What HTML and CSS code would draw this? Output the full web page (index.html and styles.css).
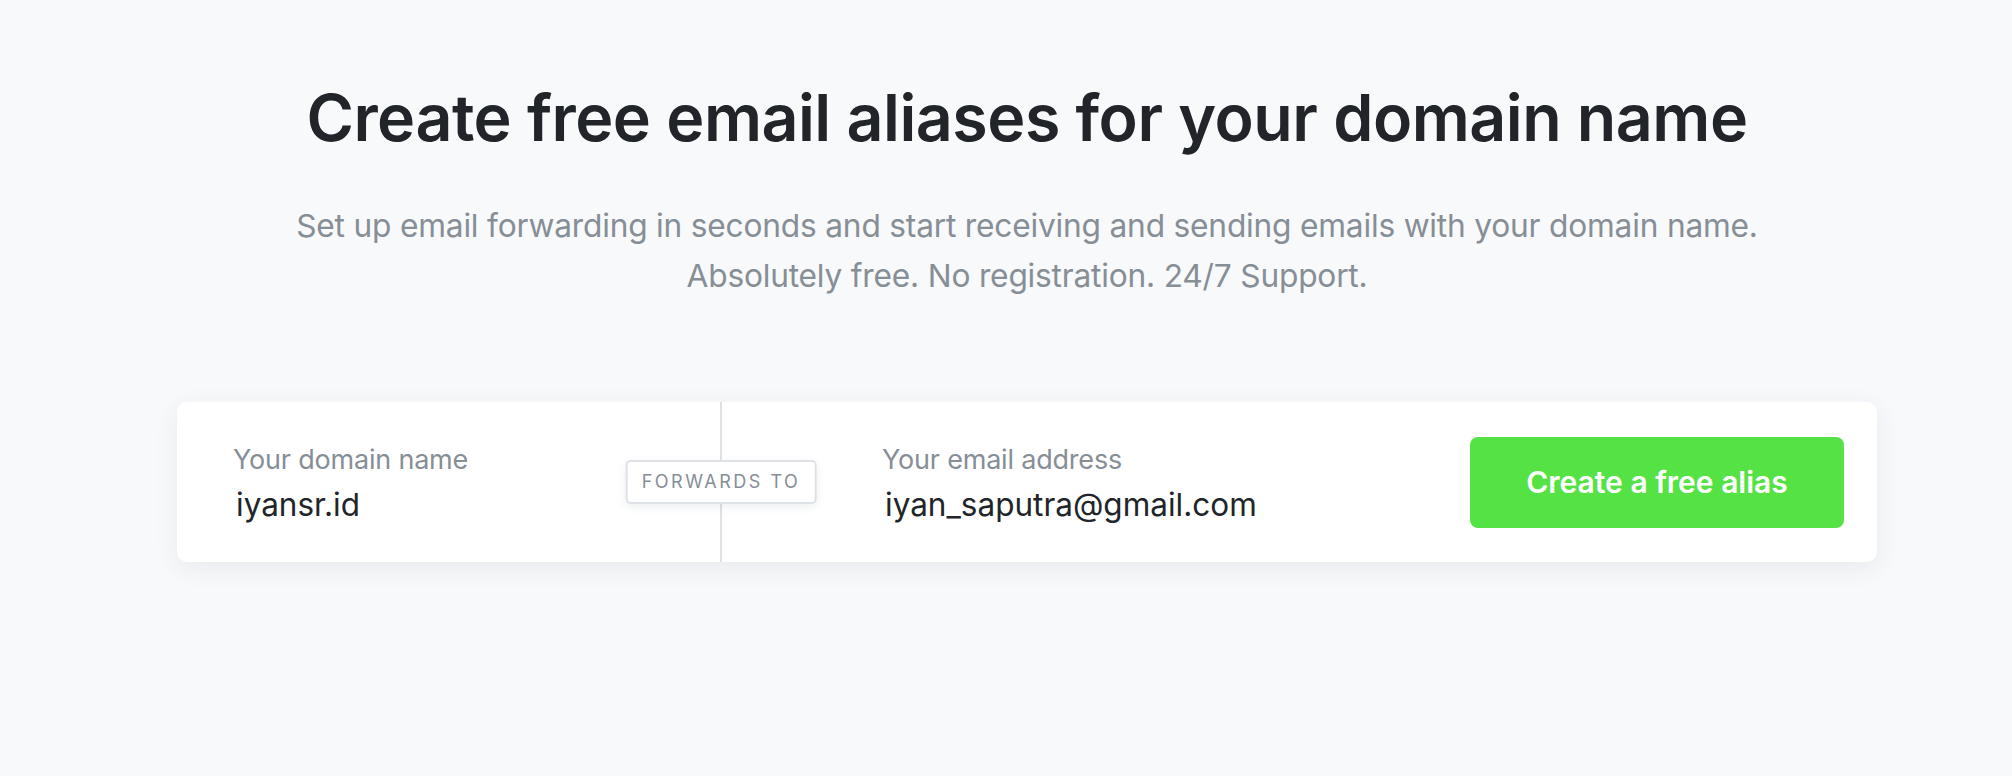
FILE: index.html
```html
<!DOCTYPE html>
<html lang="en">
<head>
<meta charset="utf-8">
<title>Create free email aliases</title>
<link rel="stylesheet" href="styles.css">
</head>
<body>
<main class="hero">
  <h1 class="title">Create free email aliases for your domain name</h1>
  <p class="subtitle">Set up email forwarding in seconds and start receiving and sending emails with your domain name.<br>Absolutely free. No registration. 24/7 Support.</p>
  <form class="card">
    <div class="field field-domain">
      <label class="label">Your domain name</label>
      <div class="value">iyansr.id</div>
    </div>
    <div class="divider"><span class="badge">FORWARDS TO</span></div>
    <div class="field field-email">
      <label class="label">Your email address</label>
      <div class="value">iyan_saputra@gmail.com</div>
    </div>
    <button type="button" class="btn">Create a free alias</button>
  </form>
</main>
</body>
</html>
```

FILE: styles.css
```css
html, body {
  margin: 0;
  padding: 0;
}
body {
  background: #f8f9fb;
  font-family: Inter, "Noto Sans", sans-serif;
  color: #212529;
  height: 776px;
  overflow: hidden;
}
.hero {
  display: flex;
  flex-direction: column;
  align-items: center;
  padding-top: 78px;
  padding-left: 42px;
}
.title {
  margin: 0;
  font-family: Inter, sans-serif;
  font-weight: 600;
  font-size: 64.5px;
  line-height: 80px;
  letter-spacing: -0.5px;
  color: #212529;
  text-align: center;
}
.subtitle {
  margin: 43px 0 0;
  font-family: Inter, sans-serif;
  font-weight: 400;
  font-size: 31.7px;
  line-height: 50px;
  letter-spacing: -0.2px;
  color: #868e96;
  text-align: center;
}
.card {
  margin-top: 101px;
  width: 1700px;
  height: 160px;
  background: #fff;
  border-radius: 10px;
  box-shadow: 0 6px 24px rgba(30, 50, 80, 0.08);
  display: flex;
  align-items: stretch;
}
.field {
  display: flex;
  flex-direction: column;
  justify-content: center;
  padding-top: 4px;
}
.field-domain {
  flex: 0 0 543px;
  box-sizing: border-box;
  padding-left: 56px;
}
.field-email {
  flex: 1;
  padding-left: 160px;
}
.label {
  font-size: 27px;
  line-height: 34px;
  color: #868e96;
  font-weight: 400;
  letter-spacing: -0.2px;
}
.value {
  margin-top: 8px;
  padding-left: 3px;
  font-size: 31.5px;
  line-height: 40px;
  color: #212529;
}
.divider {
  width: 2px;
  background: #dee2e6;
  position: relative;
}
.badge {
  position: absolute;
  left: 50%;
  top: 50%;
  transform: translate(-50%, -50%);
  background: #fff;
  border: 2px solid #dee2e6;
  border-radius: 5px;
  box-shadow: 0 3px 8px rgba(30, 50, 80, 0.08);
  padding: 0 14px;
  height: 40px;
  line-height: 40px;
  font-size: 18px;
  letter-spacing: 2.5px;
  color: #868e96;
  white-space: nowrap;
}
.btn {
  align-self: center;
  margin-right: 33px;
  width: 374px;
  height: 91px;
  border: 0;
  border-radius: 8px;
  background: #55e244;
  color: #fff;
  font-family: Inter, sans-serif;
  font-weight: 600;
  font-size: 30px;
  cursor: pointer;
}
```
